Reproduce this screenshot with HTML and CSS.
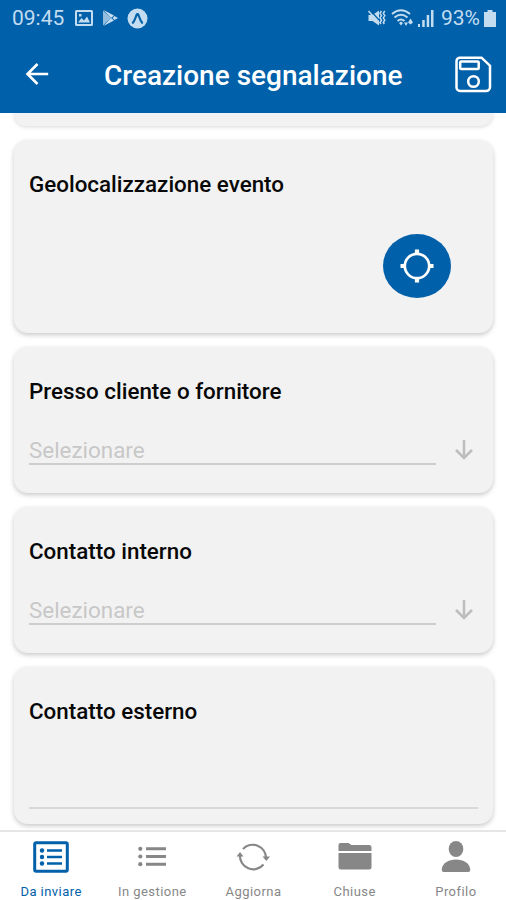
FILE: index.html
```html
<!DOCTYPE html>
<html lang="it">
<head>
<meta charset="utf-8">
<title>Creazione segnalazione</title>
<link rel="stylesheet" href="styles.css">
</head>
<body>
<div class="app">
  <header class="top">
    <div class="status">
      <span class="clock">09:45</span>
      <svg class="s-image" width="18" height="16" viewBox="0 0 18 16"><path fill="currentColor" fill-rule="evenodd" d="M1.500 0h15a1.500 1.500 0 0 1 1.500 1.500v13a1.500 1.500 0 0 1-1.500 1.500h-15a1.500 1.500 0 0 1-1.500-1.500v-13a1.500 1.500 0 0 1 1.500-1.500zM2 2v12h14V2zM3 12.500l3.500-4.500 2.500 2.500 3-4 3 6zM4 4h2.500v2.500H4z"/></svg>
      <svg class="s-play" width="17" height="16" viewBox="0 0 17 16"><path fill="currentColor" d="M1 .5l8 7.500-8 7.500z" opacity=".75"/><path fill="currentColor" d="M1.500 0l10.500 5.500-3 2.500zM1.500 16l10.500-5.500-3-2.500zM12.500 6l3.500 2-3.500 2-2-2z"/></svg>
      <svg class="s-expo" width="21" height="21" viewBox="0 0 21 21"><circle cx="10.500" cy="10.500" r="10" fill="currentColor"/><path d="M5.900 14.800c1.800-2 2.700-5.500 3.700-8 .4-.9 1.400-.9 1.800 0 1 2.500 1.900 6 3.700 8" fill="none" stroke="#0060a9" stroke-width="2.200" stroke-linecap="round"/></svg>
      <span class="grow"></span>
      <svg class="s-mute" width="19" height="18" viewBox="0 0 19 18"><path fill="currentColor" d="M1.500 6h4L12 1.500v15L5.500 12h-4z"/><path d="M3 1l9 10" stroke="#0060a9" stroke-width="1.200"/><path d="M1.500 2l10.500 12" stroke="currentColor" stroke-width="1.500"/><path d="M14.500 2l-1.500 2.300 1.500 2.300-1.500 2.300 1.500 2.300-1.500 2.300 1 1.500M17.800 2l-1.500 2.300 1.500 2.300-1.500 2.300 1.500 2.300-1.500 2.300 1 1.500" fill="none" stroke="currentColor" stroke-width="1.500"/></svg>
      <svg class="s-wifi" width="23" height="18" viewBox="0 0 23 18"><g fill="none" stroke="currentColor" stroke-width="2"><path d="M1 5q9-7.500 18 0M3.500 8.500q6.500-5.500 13 0M6.500 12q3.500-3 7 0"/></g><path fill="currentColor" d="M8 14l2-1.500 2 1.500-2 2.500zM13 13.500h4l-2 3.500zM17 13.500l2.500-4 2.500 4-2.500 2z"/></svg>
      <svg class="s-signal" width="16" height="17" viewBox="0 0 16 17"><path fill="currentColor" d="M0 14h2v3H0zM4.200 10h2.500v7H4.200zM8.700 5h2.500v12H8.700zM13 0h2.500v17H13z"/></svg>
      <span class="percent">93%</span>
      <svg class="s-battery" width="12" height="17" viewBox="0 0 12 17"><path fill="currentColor" d="M3.500 0h5v2H12v15H0V2h3.500z"/></svg>
    </div>
    <div class="bar">
      <svg class="back" width="24" height="24" viewBox="0 0 24 24"><path d="M23.200 12H2.500M12.500 2L2.500 12l10 10" fill="none" stroke="#fff" stroke-width="2.600"/></svg>
      <h1>Creazione segnalazione</h1>
      <svg class="save" width="37" height="37" viewBox="0 0 37 37"><g fill="none" stroke="#fff" stroke-width="2.500"><path d="M5 1.700h21.500l8.500 8V31a4 4 0 0 1-4 4H5a3.500 3.500 0 0 1-3.500-3.500V5.200A3.500 3.500 0 0 1 5 1.700z"/><rect x="5.200" y="5.500" width="18.500" height="7.500" rx="1"/><circle cx="18.500" cy="25.500" r="5.300"/></g></svg>
    </div>
  </header>
  <main>
    <section class="card previous"></section>
    <section class="card location">
      <h2>Geolocalizzazione evento</h2>
      <div class="locate">
        <svg width="34" height="34" viewBox="0 0 34 34"><g fill="none" stroke="#fff"><circle cx="17" cy="17" r="12.200" stroke-width="2.700"/><path stroke-width="4.200" d="M17 .5v5M17 28.500v5M.5 17h5M28.500 17h5"/></g></svg>
      </div>
    </section>
    <section class="card choice">
      <h2>Presso cliente o fornitore</h2>
      <div class="select"><span>Selezionare</span><svg width="18" height="20" viewBox="0 0 18 20"><path d="M9 0v18M1 10l8 8 8-8" fill="none" stroke="#bdbdbd" stroke-width="2.500"/></svg></div>
    </section>
    <section class="card choice">
      <h2>Contatto interno</h2>
      <div class="select"><span>Selezionare</span><svg width="18" height="20" viewBox="0 0 18 20"><path d="M9 0v18M1 10l8 8 8-8" fill="none" stroke="#bdbdbd" stroke-width="2.500"/></svg></div>
    </section>
    <section class="card external">
      <h2>Contatto esterno</h2>
      <div class="line"></div>
    </section>
  </main>
  <nav>
    <div class="tab active">
      <svg width="36" height="32" viewBox="0 0 36 32"><rect x="1.700" y="1.700" width="32.600" height="28.600" rx="1.500" fill="none" stroke="currentColor" stroke-width="3"/><path d="M14 9.500h15M14 16h15M14 22.500h15" stroke="currentColor" stroke-width="2.600"/><g fill="currentColor"><circle cx="9" cy="9.500" r="2.200"/><circle cx="9" cy="16" r="2.200"/><circle cx="9" cy="22.500" r="2.200"/></g></svg>
      <span>Da inviare</span>
    </div>
    <div class="tab">
      <svg width="36" height="32" viewBox="0 0 36 32"><path d="M12 7.800h20M12 15.500h20M12 23.200h20" stroke="currentColor" stroke-width="2.900"/><g fill="currentColor"><circle cx="6.300" cy="7.800" r="2.100"/><circle cx="6.300" cy="15.500" r="2.100"/><circle cx="6.300" cy="23.200" r="2.100"/></g></svg>
      <span>In gestione</span>
    </div>
    <div class="tab">
      <svg width="36" height="32" viewBox="0 0 36 32"><path d="M8 8A13.300 13.300 0 0 1 31 17M28.500 23.500A13.300 13.300 0 0 1 5 14" fill="none" stroke="currentColor" stroke-width="2.200"/><path fill="currentColor" d="M27.500 15.500h7.500l-3.700 4.500zM1.500 15.500h7l-3.500-4.500z"/></svg>
      <span>Aggiorna</span>
    </div>
    <div class="tab">
      <svg width="36" height="32" viewBox="0 0 36 32"><path fill="currentColor" d="M1.500 10V4a2 2 0 0 1 2-2h8l3 2H32a2.500 2.500 0 0 1 2.500 2.500V10zM1.500 12h33v14a2.500 2.500 0 0 1-2.500 2.500H4A2.500 2.500 0 0 1 1.500 26z"/></svg>
      <span>Chiuse</span>
    </div>
    <div class="tab">
      <svg width="36" height="32" viewBox="0 0 36 32"><ellipse cx="18" cy="8" rx="7.300" ry="8" fill="currentColor"/><path fill="currentColor" d="M3.700 29C4 22 10.500 18.500 18 18.500S32 22 32.300 29q0 2-2 2H5.700q-2 0-2-2z"/></svg>
      <span>Profilo</span>
    </div>
  </nav>
</div>
</body>
</html>
```

FILE: styles.css
```css
* { box-sizing: border-box; }
body { margin: 0; font-family: Roboto, "Liberation Sans", sans-serif; background: #fff; }
svg { display: block; flex: none; }
.app { width: 506px; height: 900px; display: flex; flex-direction: column; overflow: hidden; }
.top { flex: none; height: 113px; background: #0060a9; color: #fff; }
.status { height: 36px; display: flex; align-items: center; padding: 0 10px 0 12px; color: #c3dcf0; font-size: 21px; }
.clock { width: 53px; }
.s-image { margin-left: 10px; }
.s-play { margin-left: 9px; }
.s-expo { margin-left: 8px; }
.grow { flex: 1; }
.s-wifi { margin-left: 5px; }
.s-signal { margin-left: 4px; }
.percent { width: 38px; margin: 0 5px 0 7px; }
.bar { height: 77px; display: flex; align-items: center; padding: 0 14px 0 25px; }
.back { margin-top: -1px; }
h1 { margin: 3px 0 0 55px; flex: 1; font-size: 28px; line-height: 36px; font-weight: 500; white-space: nowrap; }
.save { margin-top: -1px; }
main { flex: 1; min-height: 0; overflow: hidden; padding: 0 13px 0 14px; display: flex; flex-direction: column; gap: 14px; }
.card { flex: none; background: #f2f2f2; border-radius: 14px; padding: 30px 15px 0; box-shadow: 0 2px 5px rgba(0,0,0,.22); }
.previous { height: 13px; padding: 0; border-radius: 0 0 14px 14px; box-shadow: 0 1px 4px rgba(0,0,0,.16); }
.location { height: 192.5px; }
.choice { height: 146.2px; }
.external { height: 157px; }
h2 { margin: 0; font-size: 22.4px; line-height: 28px; font-weight: 500; color: #080808; white-space: nowrap; }
.locate { width: 68px; height: 64px; margin: 36px 27px 0 auto; border-radius: 50%; background: #0060a9; display: flex; align-items: center; justify-content: center; }
.select { margin-top: 31px; display: flex; align-items: flex-start; justify-content: space-between; padding-right: 5px; }
.select span { width: 407px; height: 29px; border-bottom: 2px solid #cecece; font-size: 22.4px; line-height: 28px; color: #c8c8c8; }
.select svg { margin-top: 4px; }
.line { height: 2px; background: #d8d8d8; margin-top: 82px; }
nav { flex: none; height: 70px; border-top: 2px solid #e6e6e6; background: #fff; display: grid; grid-template-columns: repeat(5, 1fr); }
.tab { display: flex; flex-direction: column; align-items: center; padding: 9px 0 0 1px; color: #878787; font-size: 13px; letter-spacing: .45px; line-height: 16px; white-space: nowrap; }
.tab span { margin-top: 11px; }
.active { color: #0060a9; }
```
